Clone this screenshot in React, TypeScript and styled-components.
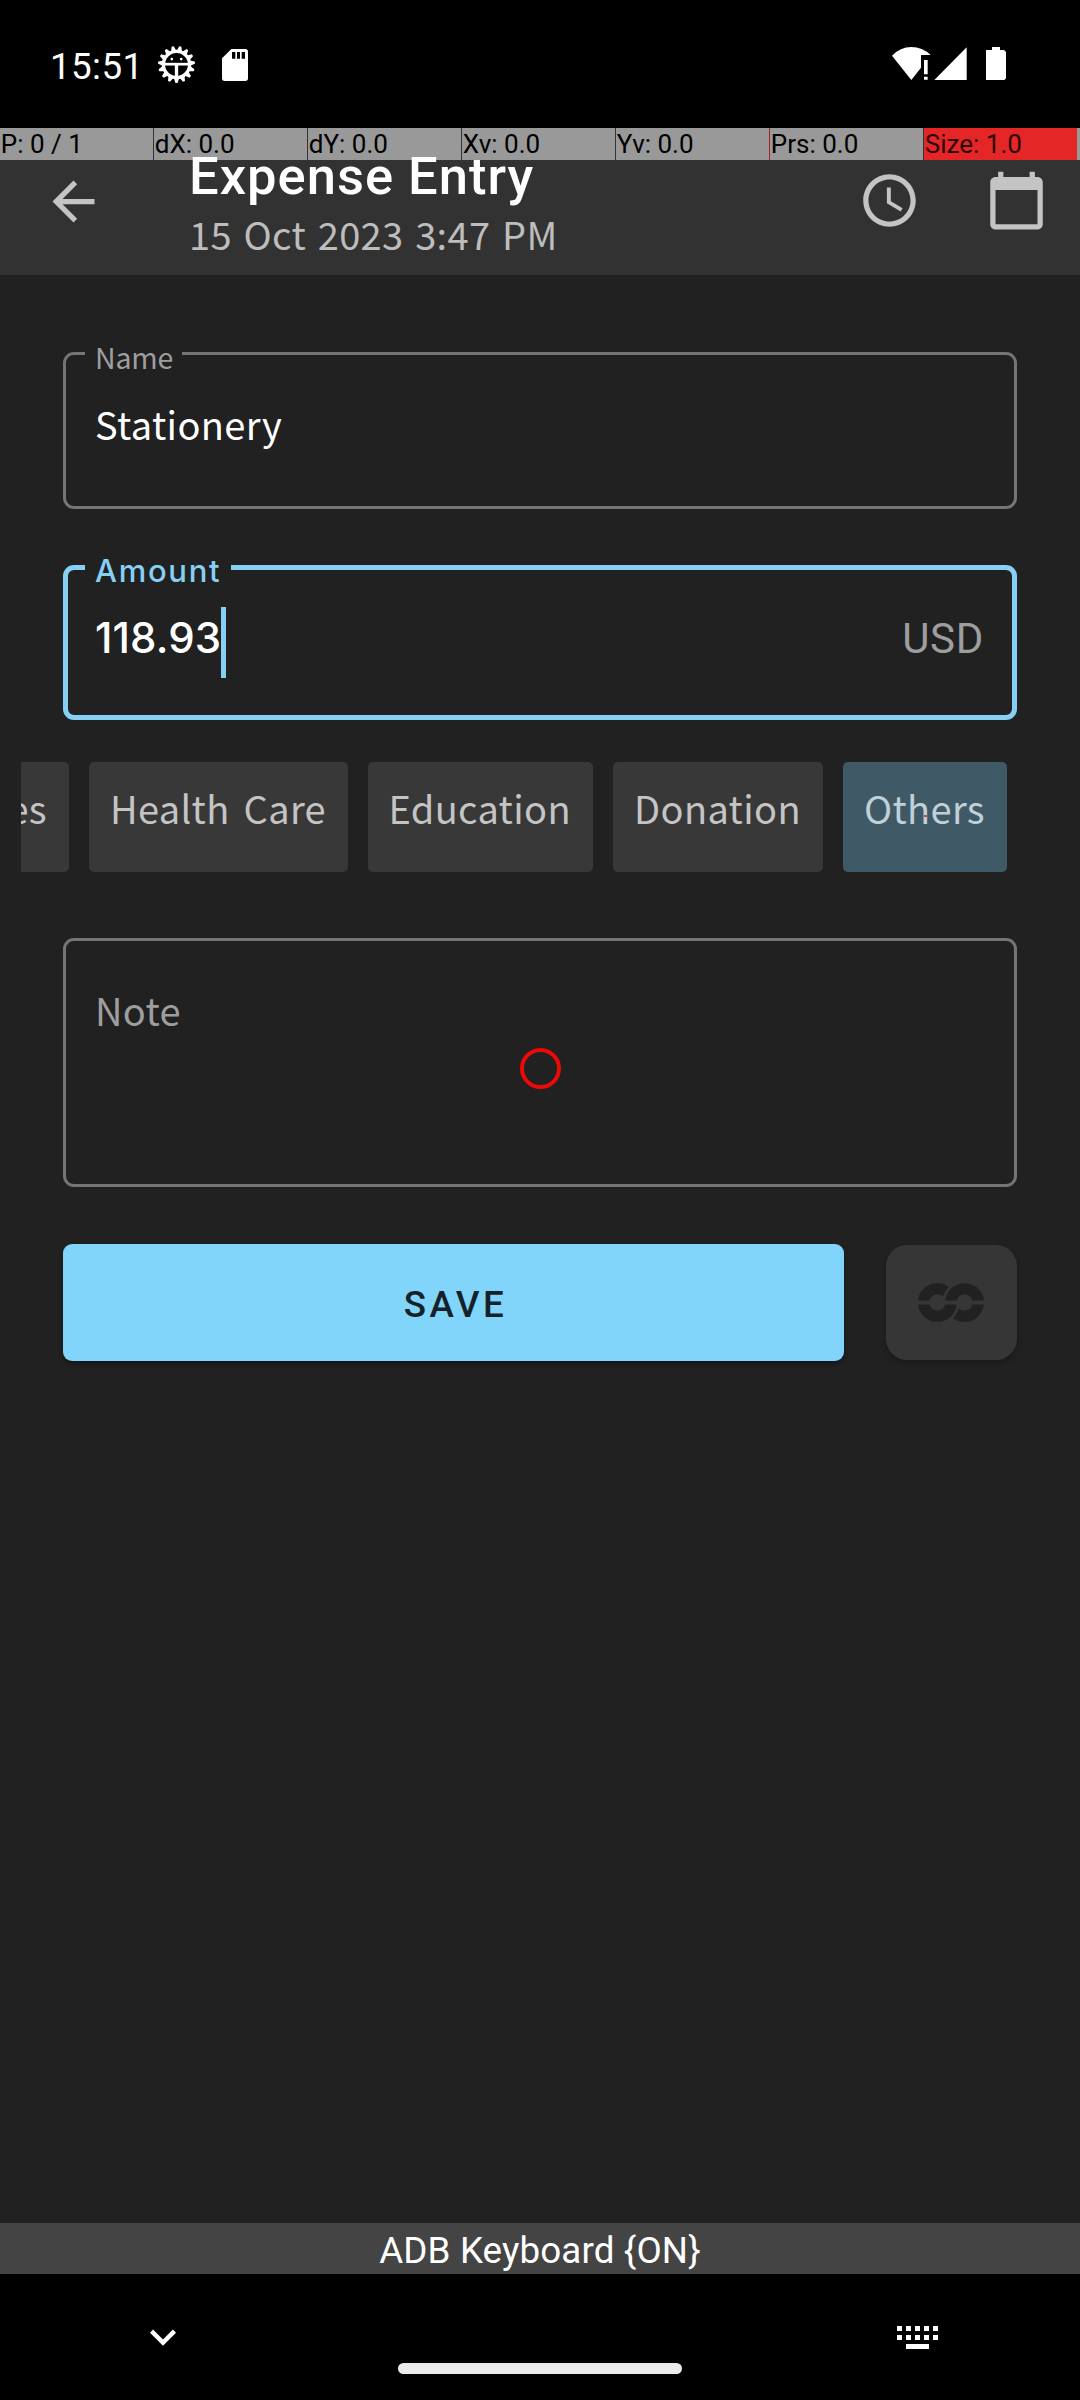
import React from "react";
import styled, { createGlobalStyle, css } from "styled-components";

const color = {
  surface: "#212121",
  bar: "#323232",
  chip: "#383838",
  outline: "#757575",
  accent: "#87d0f5",
  muted: "#9e9e9e",
  icon: "#c4c4c4",
};

const sourceSans = css`
  font-family: "Noto Sans CJK JP", "Noto Sans", sans-serif;
  letter-spacing: 0.35px;
`;

const GlobalStyle = createGlobalStyle`
  * { box-sizing: border-box; }
  body { margin: 0; background: #000; font-family: Roboto, sans-serif; }
  svg { display: block; flex: none; }
`;

const Screen = styled.div`
  display: flex;
  flex-direction: column;
  position: relative;
  width: 1080px;
  height: 2400px;
  overflow: hidden;
  background: ${color.surface};
  white-space: pre;
`;

/* ---------- status bar ---------- */

const StatusBar = styled.div`
  display: flex;
  align-items: flex-start;
  justify-content: space-between;
  flex: none;
  height: 128px;
  padding: 45px 74px 0 50px;
  background: #000;
  color: #fff;
`;

const StatusGroup = styled.div<{ $top?: number }>`
  display: flex;
  align-items: flex-start;
  padding-top: ${(p) => p.$top ?? 0}px;
`;

const Clock = styled.span`
  width: 108px;
  font-size: 36.75px;
  line-height: 43px;
  letter-spacing: 0.4px;
`;

const GearIcon = styled.svg`
  width: 37px;
  height: 37px;
  margin-top: 1px;
`;

const SdIcon = styled.svg`
  width: 26px;
  height: 32px;
  margin: 4px 0 0 27px;
`;

const WifiIcon = styled.svg`
  width: 39px;
  height: 33px;
`;

const SignalIcon = styled.svg`
  width: 33px;
  height: 33px;
  margin-left: 3px;
`;

const BatteryIcon = styled.svg`
  width: 20px;
  height: 33px;
  margin-left: 19px;
`;

/* ---------- pointer debug strip ---------- */

const DebugStrip = styled.div`
  display: flex;
  flex: none;
  height: 32px;
  background: #999;
`;

const DebugCell = styled.div<{ $hot?: boolean; $edge?: string }>`
  flex: none;
  width: ${(p) => (p.$hot ? 153 : 154)}px;
  padding-left: 0.8px;
  border-right: ${(p) => (p.$hot ? "none" : `1px solid ${p.$edge ?? "#333"}`)};
  background: ${(p) => (p.$hot ? "#e52626" : "#999")};
  color: ${(p) => (p.$hot ? "#2b0707" : "#000")};
  font-size: 26px;
  line-height: 32px;
`;

/* ---------- app bar ---------- */

const AppBar = styled.header`
  display: flex;
  align-items: flex-start;
  flex: none;
  height: 115px;
  padding: 10px 32px 0 42px;
  background: ${color.bar};
  color: ${color.icon};
`;

const BarIcon = styled.svg`
  width: 63px;
  height: 63px;
  fill: currentColor;
`;

const Heading = styled.div`
  flex: 1;
  margin: -25px 0 0 84px;
`;

const Title = styled.h1`
  margin: 0;
  color: #fff;
  font-size: 52.5px;
  font-weight: 500;
  line-height: 62px;
  letter-spacing: 1px;
`;

const Subtitle = styled.div`
  ${sourceSans}
  margin-top: -1px;
  color: #bdbdbd;
  font-size: 38px;
  line-height: 55px;
  word-spacing: 2.8px;
`;

const Actions = styled.div`
  display: flex;
  gap: 64px;
  margin-top: -1px;
`;

/* ---------- form ---------- */

const Form = styled.main`
  display: flex;
  flex-direction: column;
  flex: 1;
  padding: 77px 63px 0;
`;

const Field = styled.div<{ $height: number; $focused?: boolean }>`
  display: flex;
  align-items: baseline;
  justify-content: space-between;
  position: relative;
  flex: none;
  height: ${(p) => p.$height}px;
  padding: ${(p) => (p.$focused ? "42px 28px 0 27px" : "41px 29px 0")};
  border: ${(p) => (p.$focused ? `5px solid ${color.accent}` : `3px solid ${color.outline}`)};
  border-radius: 11px;
`;

const FieldStack = styled.div`
  display: flex;
  flex-direction: column;
  gap: 56px;
`;

const Label = styled.label<{ $focused?: boolean; $width: number }>`
  position: absolute;
  top: ${(p) => (p.$focused ? -19 : -18)}px;
  left: ${(p) => (p.$focused ? 17 : 19)}px;
  width: ${(p) => p.$width}px;
  padding-left: 10px;
  background: ${color.surface};
  line-height: 40px;
  ${(p) =>
    p.$focused
      ? css`
          color: ${color.accent};
          font-family: Inter, sans-serif;
          font-size: 31px;
          font-weight: 500;
          letter-spacing: 1.7px;
        `
      : css`
          color: ${color.muted};
          font-family: "Noto Sans CJK JP", sans-serif;
          font-size: 28.5px;
          letter-spacing: -0.2px;
        `}
`;

const TextValue = styled.span<{ $placeholder?: boolean }>`
  ${sourceSans}
  color: ${(p) => (p.$placeholder ? color.muted : "#fff")};
  font-size: 38px;
  line-height: 55px;
`;

const AmountValue = styled.span`
  position: relative;
  color: #fff;
  font-family: Inter, sans-serif;
  font-size: 42px;
  font-weight: 500;
  line-height: 51px;
  letter-spacing: 0.1px;
`;

const Caret = styled.i`
  position: absolute;
  top: -5px;
  left: 126px;
  width: 5px;
  height: 71px;
  background: ${color.accent};
`;

const Suffix = styled.span`
  color: ${color.muted};
  font-size: 42px;
  line-height: 49px;
  letter-spacing: 0.7px;
`;

const Chips = styled.div`
  display: flex;
  justify-content: flex-end;
  gap: 20px;
  flex: none;
  height: 110px;
  margin: 42px -42px 66px;
  padding-right: 52px;
  overflow: hidden;
`;

const Chip = styled.button<{ $width: number; $selected?: boolean }>`
  ${sourceSans}
  display: flex;
  justify-content: flex-end;
  align-items: flex-start;
  flex: none;
  width: ${(p) => p.$width}px;
  height: 110px;
  padding: 18px 22px 0 0;
  border: 0;
  border-radius: 5px;
  background: ${(p) => (p.$selected ? "#405966" : color.chip)};
  color: ${(p) => (p.$selected ? "#bfd0d8" : "#c4c4c4")};
  font-size: 38px;
  line-height: 55px;
  word-spacing: 5px;
  white-space: pre;
`;

const Buttons = styled.div`
  display: flex;
  align-items: center;
  gap: 42px;
  margin-top: 57px;
`;

const SaveButton = styled.button`
  flex: 1;
  height: 117px;
  padding: 4px 0 0 4px;
  border: 0;
  border-radius: 9px;
  background: #81d4fa;
  box-shadow: 0 3px 5px rgba(0, 0, 0, 0.35);
  color: #142229;
  font-family: Roboto, sans-serif;
  font-size: 36.75px;
  font-weight: 500;
  letter-spacing: 3.5px;
`;

const RepeatButton = styled.button`
  display: flex;
  align-items: center;
  justify-content: center;
  width: 131px;
  height: 115px;
  padding: 0 1px 1px 0;
  border: 0;
  border-radius: 21px;
  background: #363636;
  box-shadow: 0 3px 5px rgba(0, 0, 0, 0.25);
`;

const LoopIcon = styled.svg`
  width: 66px;
  height: 39px;
`;

/* ---------- keyboard bar and navigation ---------- */

const KeyboardBar = styled.div`
  flex: none;
  height: 51px;
  background: #444;
  color: #fff;
  font-size: 36.75px;
  line-height: 55px;
  letter-spacing: 0.13px;
  text-align: center;
`;

const NavBar = styled.nav`
  display: flex;
  align-items: flex-start;
  flex: none;
  height: 126px;
  padding-left: 137px;
  background: #000;
`;

const HideIcon = styled.svg`
  width: 52px;
  height: 52px;
  margin-top: 37px;
`;

const HomePill = styled.div`
  width: 284px;
  height: 11px;
  margin: 89px 215px 0 209px;
  border-radius: 6px;
  background: #ebebeb;
`;

const KeyboardIcon = styled.svg`
  width: 41px;
  height: 23px;
  margin-top: 52px;
`;

/* ---------- touch pointer overlay ---------- */

const TouchRing = styled.div`
  position: absolute;
  top: 1048px;
  left: 520px;
  width: 41px;
  height: 41px;
  border: 4px solid #ee0808;
  border-radius: 50%;
`;

const TouchDot = styled.div`
  position: absolute;
  top: 815px;
  left: 924px;
  width: 3px;
  height: 2px;
  background: #c04848;
`;

/* Fifteen blunt teeth, one of them pointing straight down. */
const TEETH = 15;
const polar = (radius: number, angle: number) =>
  `${(55 + radius * Math.sin(angle)).toFixed(1)},${(55 - radius * Math.cos(angle)).toFixed(1)}`;
const gearPoints = Array.from({ length: TEETH }, (_, i) => {
  const tip = Math.PI + (i * 2 * Math.PI) / TEETH;
  const valley = tip + Math.PI / TEETH;
  return [polar(55, tip - 0.06), polar(55, tip + 0.06), polar(44, valley - 0.05), polar(44, valley + 0.05)].join(" ");
}).join(" ");

const readings = [
  { text: "P: 0 / 1" },
  { text: "dX: 0.0" },
  { text: "dY: 0.0" },
  { text: "Xv: 0.0" },
  { text: "Yv: 0.0", edge: "#a82020" },
  { text: "Prs: 0.0" },
  { text: "Size: 1.0", hot: true },
];

const categories = [
  { name: "es", width: 64 },
  { name: "Health Care", width: 259 },
  { name: "Education", width: 225 },
  { name: "Donation", width: 210 },
  { name: "Others", width: 164, selected: true },
];

export default function App() {
  return (
    <Screen>
      <GlobalStyle />
      <StatusBar>
        <StatusGroup>
          <Clock>15:51</Clock>
          <GearIcon viewBox="0 0 110 110">
            <polygon points={gearPoints} fill="#fff" />
            <circle cx="55" cy="55" r="34" fill="#000" />
            <rect x="20" y="50" width="70" height="8" fill="#fff" />
            <rect x="50" y="56" width="10" height="38" fill="#fff" />
            <circle cx="41" cy="39" r="4" fill="#fff" />
            <circle cx="69" cy="39" r="4" fill="#fff" />
          </GearIcon>
          <SdIcon viewBox="0 0 78 96">
            <path
              d="M28 0H70q8 0 8 8V88q0 8-8 8H8q-8 0-8-8V28ZM30 9V29H40V9ZM45 9V29H54V9ZM59 9V29H69V9Z"
              fill="#fff"
              fillRule="evenodd"
            />
          </SdIcon>
        </StatusGroup>
        <StatusGroup $top={2}>
          <WifiIcon viewBox="0 0 117 99">
            <path d="M0 26Q25 0 58 0T116 24H87V62L58 99Z" fill="#fff" />
            <path d="M96 39H107V82H96ZM96 89H107V98H96Z" fill="#fff" />
          </WifiIcon>
          <SignalIcon viewBox="0 0 99 99">
            <path d="M1 99H98V1Z" fill="#fff" />
          </SignalIcon>
          <BatteryIcon viewBox="0 0 60 99">
            <path d="M18 0H42V9H54L60 15V94L55 99H0V9H18Z" fill="#fff" />
          </BatteryIcon>
        </StatusGroup>
      </StatusBar>

      <DebugStrip>
        {readings.map((r) => (
          <DebugCell key={r.text} $hot={r.hot} $edge={r.edge}>
            {r.text}
          </DebugCell>
        ))}
      </DebugStrip>

      <AppBar>
        <BarIcon viewBox="0 0 24 24">
          <path d="M20 11H7.83l5.59-5.59L12 4l-8 8 8 8 1.41-1.41L7.83 13H20v-2z" />
        </BarIcon>
        <Heading>
          <Title>Expense Entry</Title>
          <Subtitle>15 Oct 2023 3:47 PM</Subtitle>
        </Heading>
        <Actions>
          <BarIcon viewBox="0 0 24 24">
            <path d="M11.99 2C6.47 2 2 6.48 2 12s4.47 10 9.99 10C17.52 22 22 17.52 22 12S17.52 2 11.99 2zM12 20c-4.42 0-8-3.58-8-8s3.58-8 8-8 8 3.58 8 8-3.58 8-8 8zm.5-13H11v6l5.25 3.15.75-1.23-4.5-2.67z" />
          </BarIcon>
          <BarIcon viewBox="0 0 24 24">
            <path d="M20 3h-1V1h-2v2H7V1H5v2H4c-1.1 0-2 .9-2 2v16c0 1.1.9 2 2 2h16c1.1 0 2-.9 2-2V5c0-1.1-.9-2-2-2zm0 18H4V8h16v13z" />
          </BarIcon>
        </Actions>
      </AppBar>

      <Form>
        <FieldStack>
          <Field $height={157}>
            <Label $width={97}>Name</Label>
            <TextValue>Stationery</TextValue>
          </Field>
          <Field $height={155} $focused>
            <Label $focused $width={146}>
              Amount
            </Label>
            <AmountValue>
              118.93
              <Caret />
            </AmountValue>
            <Suffix>USD</Suffix>
          </Field>
        </FieldStack>
        <Chips>
          {categories.map((c) => (
            <Chip key={c.name} $width={c.width} $selected={c.selected}>
              {c.name}
            </Chip>
          ))}
        </Chips>
        <Field $height={249}>
          <TextValue $placeholder>Note</TextValue>
        </Field>
        <Buttons>
          <SaveButton>SAVE</SaveButton>
          <RepeatButton>
            <LoopIcon viewBox="0 0 198 117">
              <defs>
                <mask id="upperCut">
                  <rect width="198" height="117" fill="#fff" />
                  <circle cx="140" cy="58.5" r="67" fill="#000" />
                </mask>
                <mask id="lowerCut">
                  <rect width="198" height="117" fill="#fff" />
                  <circle cx="58" cy="58.5" r="67" fill="#000" />
                </mask>
              </defs>
              <g fill="#212121">
                <path mask="url(#upperCut)" d="M0.3 52.5A58 58 0 0 1 115.7 52.5H81.2A24 24 0 0 0 34.8 52.5Z" />
                <path d="M82.3 52.5A58 58 0 0 1 197.7 52.5H163.2A24 24 0 0 0 116.8 52.5Z" />
                <path d="M0.3 64.5A58 58 0 0 0 115.7 64.5H81.2A24 24 0 0 1 34.8 64.5Z" />
                <path mask="url(#lowerCut)" d="M82.3 64.5A58 58 0 0 0 197.7 64.5H163.2A24 24 0 0 1 116.8 64.5Z" />
              </g>
            </LoopIcon>
          </RepeatButton>
        </Buttons>
      </Form>

      <KeyboardBar>{"ADB Keyboard {ON}"}</KeyboardBar>
      <NavBar>
        <HideIcon viewBox="0 0 24 24">
          <path d="M16.59 8.59L12 13.17 7.41 8.59 6 10l6 6 6-6z" fill="#fff" />
        </HideIcon>
        <HomePill />
        <KeyboardIcon viewBox="0 0 41 23">
          {[0, 9, 18, 27, 36].map((x) => (
            <path key={x} d={`M${x} 0h5v5h-5zM${x} 9h5v5h-5z`} fill="#fff" />
          ))}
          <rect x="9" y="18" width="23" height="5" fill="#fff" />
        </KeyboardIcon>
      </NavBar>

      <TouchDot />
      <TouchRing />
    </Screen>
  );
}
